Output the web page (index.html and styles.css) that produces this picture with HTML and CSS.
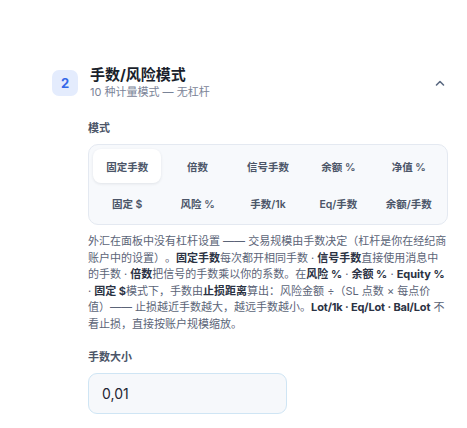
FILE: index.html
```html
<!DOCTYPE html>
<html lang="zh-CN">
<head>
<meta charset="utf-8">
<title>手数/风险模式</title>
<link rel="stylesheet" href="styles.css">
</head>
<body>
<section class="step">
  <header class="step-head">
    <div class="step-num">2</div>
    <div class="step-titles">
      <div class="step-title">手数/风险模式</div>
      <div class="step-sub">10 种计量模式 — 无杠杆</div>
    </div>
    <svg class="chevron" width="16" height="16" viewBox="0 0 16 16" fill="none">
      <path d="M4.5 10 L8 6.5 L11.5 10" stroke="#5b6a82" stroke-width="1.6" stroke-linecap="round" stroke-linejoin="round"/>
    </svg>
  </header>

  <div class="step-body">
    <div class="field-label">模式</div>
    <div class="segments">
      <button class="seg active">固定手数</button>
      <button class="seg">倍数</button>
      <button class="seg">信号手数</button>
      <button class="seg">余额 %</button>
      <button class="seg">净值 %</button>
      <button class="seg">固定 $</button>
      <button class="seg">风险 %</button>
      <button class="seg">手数/1k</button>
      <button class="seg">Eq/手数</button>
      <button class="seg">余额/手数</button>
    </div>

    <p class="help">外汇在面板中没有杠杆设置 —— 交易规模由手数决定（杠杆是你在经纪商账户中的设置）。<b>固定手数</b>每次都开相同手数 · <b>信号手数</b>直接使用消息中的手数 · <b>倍数</b>把信号的手数乘以你的系数。在<b>风险 %</b> · <b>余额 %</b> · <b>Equity %</b> · <b>固定 $</b>模式下，手数由<b>止损距离</b>算出：风险金额 ÷（SL 点数 × 每点价值）—— 止损越近手数越大，越远手数越小。<b class="tight">Lot/1k · Eq/Lot · Bal/Lot</b> 不看止损，直接按账户规模缩放。</p>

    <div class="field-label lot-label">手数大小</div>
    <input class="lot-input" type="text" value="0,01">
  </div>
</section>
</body>
</html>
```

FILE: styles.css
```css
* {
  box-sizing: border-box;
}

html, body {
  margin: 0;
  background: #ffffff;
}

body {
  font-family: Inter, "Noto Sans CJK SC", sans-serif;
  color: #1c2232;
  text-spacing-trim: space-all;
}

.step {
  padding: 65px 19px 0 52px;
}

.step-head {
  display: flex;
  align-items: center;
  gap: 12px;
}

.step-num {
  width: 26px;
  height: 26px;
  border-radius: 7px;
  background: #e4ecfd;
  color: #3468e8;
  font-weight: 700;
  font-size: 13px;
  display: flex;
  align-items: center;
  justify-content: center;
  flex: none;
}

.step-titles {
  flex: 1;
  display: flex;
  flex-direction: column;
}

.step-title {
  font-size: 15px;
  font-weight: 700;
  line-height: 19px;
  color: #1a1f2c;
}

.step-sub {
  font-size: 11px;
  line-height: 16px;
  color: #7a8397;
}

.chevron {
  flex: none;
  margin-top: 1px;
}

.step-body {
  padding-left: 36px;
  padding-top: 20px;
}

.field-label {
  font-size: 11px;
  font-weight: 700;
  line-height: 16px;
  color: #4b5568;
  margin-bottom: 8px;
}

.segments {
  display: grid;
  grid-template-columns: repeat(5, 1fr);
  gap: 3px 2px;
  padding: 4px;
  border: 1px solid #e4e9f1;
  border-radius: 10px;
  background: #f7f9fc;
}

.seg {
  height: 34px;
  border: 0;
  background: transparent;
  border-radius: 8px;
  font-family: inherit;
  font-size: 10.5px;
  font-weight: 600;
  color: #4b5568;
  padding: 0;
  cursor: pointer;
}

.seg.active {
  background: #ffffff;
  box-shadow: 0 1px 3px rgba(30, 40, 60, 0.1);
}

.help {
  margin: 8px 0 0;
  font-size: 11px;
  line-height: 16.6px;
  color: #5b6477;
}

.help b {
  font-weight: 700;
  color: #2b3243;
}

.help .tight {
  letter-spacing: -0.15px;
}

.lot-label {
  margin-top: 16px;
}

.lot-input {
  display: block;
  width: 199px;
  height: 41px;
  border: 1px solid #cfe5f4;
  border-radius: 9px;
  background: #f6f8fb;
  padding: 0 13px;
  font-family: inherit;
  font-size: 14px;
  color: #1f2533;
  outline: none;
}
```
